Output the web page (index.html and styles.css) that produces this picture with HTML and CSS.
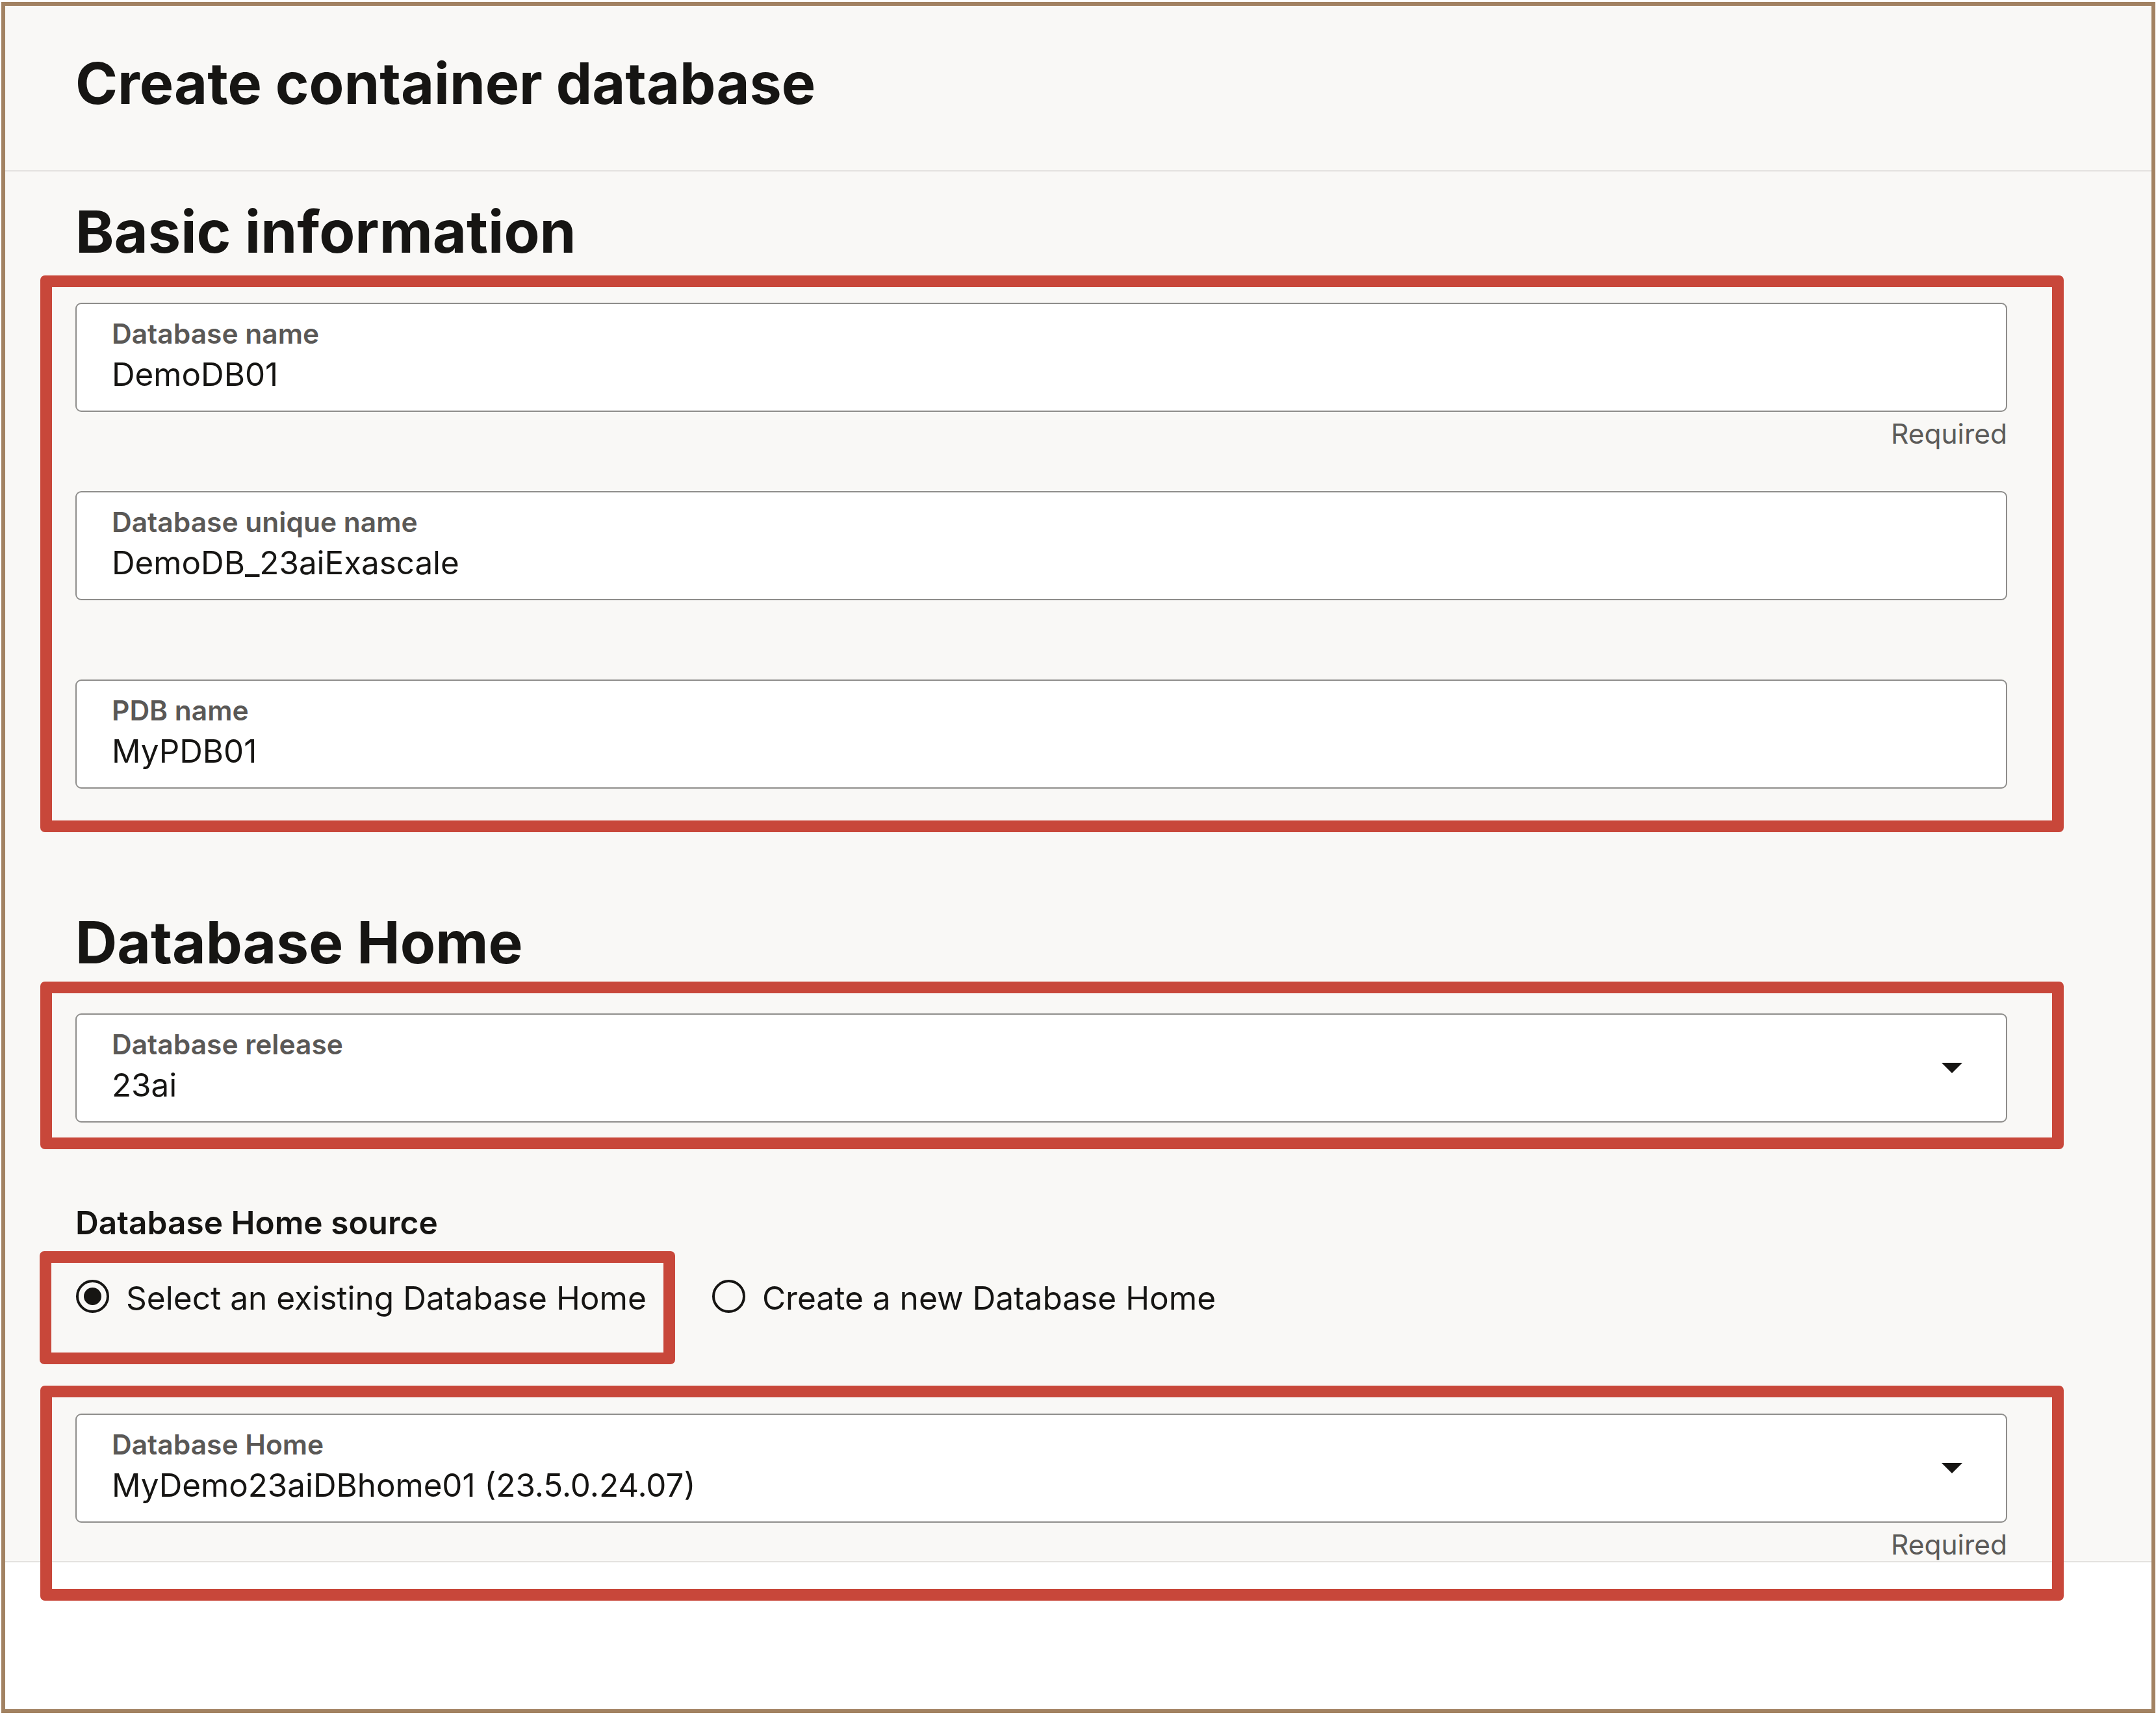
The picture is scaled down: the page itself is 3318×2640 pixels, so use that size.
FILE: index.html
```html
<!DOCTYPE html>
<html lang="en">
<head>
<meta charset="utf-8">
<title>Create container database</title>
<link rel="stylesheet" href="styles.css">
</head>
<body>
<div class="frame">
  <header class="page-header">
    <h1 class="page-title">Create container database</h1>
  </header>
  <main class="panel">
    <section class="section">
      <h2 class="section-title">Basic information</h2>
      <div class="fields annot annot-basic">
        <div class="field">
          <div class="input">
            <div class="input-text">
              <span class="input-label">Database name</span>
              <span class="input-value">DemoDB01</span>
            </div>
          </div>
          <div class="helper">Required</div>
        </div>
        <div class="field">
          <div class="input">
            <div class="input-text">
              <span class="input-label">Database unique name</span>
              <span class="input-value">DemoDB_23aiExascale</span>
            </div>
          </div>
          <div class="helper"></div>
        </div>
        <div class="field">
          <div class="input">
            <div class="input-text">
              <span class="input-label">PDB name</span>
              <span class="input-value">MyPDB01</span>
            </div>
          </div>
          <div class="helper"></div>
        </div>
      </div>
    </section>

    <section class="section section-home">
      <h2 class="section-title">Database Home</h2>
      <div class="field">
        <div class="input annot annot-release">
          <div class="input-text">
            <span class="input-label">Database release</span>
            <span class="input-value">23ai</span>
          </div>
          <svg class="caret" width="32" height="16" viewBox="0 0 32 16" aria-hidden="true"><polygon points="0,0 32,0 16,16"/></svg>
        </div>
        <div class="helper"></div>
      </div>

      <div class="radio-group">
        <div class="group-label">Database Home source</div>
        <div class="radio-row">
          <label class="radio annot annot-radio">
            <span class="radio-circle checked"><span class="radio-dot"></span></span>
            <span class="radio-text">Select an existing Database Home</span>
          </label>
          <label class="radio">
            <span class="radio-circle"></span>
            <span class="radio-text">Create a new Database Home</span>
          </label>
        </div>
      </div>

      <div class="field field-last annot annot-home">
        <div class="input">
          <div class="input-text">
            <span class="input-label">Database Home</span>
            <span class="input-value">MyDemo23aiDBhome01 (23.5.0.24.07)</span>
          </div>
          <svg class="caret" width="32" height="16" viewBox="0 0 32 16" aria-hidden="true"><polygon points="0,0 32,0 16,16"/></svg>
        </div>
        <div class="helper">Required</div>
      </div>
    </section>
  </main>
  <footer class="page-footer"></footer>
</div>
</body>
</html>
```
FILE: styles.css
```css
* { box-sizing: border-box; }

html, body {
  margin: 0;
  padding: 0;
  background: #ffffff;
}

body {
  font-family: "Inter", "Noto Sans", sans-serif;
  color: #161513;
}

.frame {
  margin: 3px 1px 3px 2px;
  height: 2634px;
  border: 6px solid #a28262;
  display: flex;
  flex-direction: column;
  background: #ffffff;
}

/* header */
.page-header {
  background: #f9f8f6;
  padding: 66px 222px 81px 108px;
  border-bottom: 2px solid #e4e2df;
}

.page-title {
  margin: 0;
  font-size: 88px;
  line-height: 106px;
  font-weight: 700;
}

/* main panel */
.panel {
  background: #f9f8f6;
  padding: 40px 222px 0 108px;
}

.section-title {
  margin: 0 0 56px;
  font-size: 90px;
  line-height: 106px;
  font-weight: 700;
}

.section-home .section-title {
  font-size: 89px;
}

.section-home {
  margin-top: 125px;
}

.fields {
  display: flex;
  flex-direction: column;
  gap: 63px;
}

.field {
  display: flex;
  flex-direction: column;
}

.input {
  height: 168px;
  background: #ffffff;
  border: 2px solid #8e8d8b;
  border-radius: 9px;
  padding: 21px 0 21px 54px;
  display: flex;
  align-items: center;
}

.input-text {
  flex: 1;
  align-self: flex-start;
  display: flex;
  flex-direction: column;
  gap: 8px;
}

.input-label {
  font-size: 42.5px;
  line-height: 50px;
  font-weight: 600;
  color: #5a5856;
}

.input-value {
  font-size: 49.3px;
  line-height: 58px;
  font-weight: 400;
  color: #161513;
  white-space: nowrap;
}

.caret {
  flex: none;
  margin-right: 67px;
  fill: #161513;
}

.helper {
  margin-top: 9px;
  height: 50px;
  font-size: 42.5px;
  line-height: 50px;
  color: #5c5b59;
  text-align: right;
}

/* radio group */
.radio-group {
  margin-top: 66px;
}

.group-label {
  font-size: 49.6px;
  line-height: 58px;
  font-weight: 600;
  color: #161513;
}

.radio-row {
  margin-top: 58px;
  display: flex;
  gap: 100px;
}

.radio {
  display: inline-flex;
  align-items: flex-start;
  gap: 26px;
  height: 58px;
}

.radio-circle {
  flex: none;
  width: 51px;
  height: 51px;
  margin-top: 1px;
  margin-left: 1px;
  border: 4px solid #161513;
  border-radius: 50%;
  display: flex;
  align-items: center;
  justify-content: center;
  background: transparent;
}

.radio-dot {
  width: 27px;
  height: 27px;
  border-radius: 50%;
  background: #161513;
}

.radio-text {
  font-size: 49.6px;
  line-height: 58px;
  white-space: nowrap;
}

.field-last {
  margin-top: 149px;
}

/* footer */
.page-footer {
  flex: 1;
  background: #ffffff;
  border-top: 2px solid #e4e2df;
}

/* red annotation frames drawn over the content */
.annot {
  position: relative;
}

.annot::after {
  content: "";
  position: absolute;
  border: 18px solid #c8473a;
  border-radius: 7px;
  pointer-events: none;
}

.annot-basic::after {
  top: -42px;
  left: -54px;
  right: -87px;
  bottom: -8px;
}

.annot-release::after {
  top: -51px;
  left: -56px;
  right: -89px;
  bottom: -43px;
}

.annot-radio::after {
  top: -43px;
  left: -55px;
  right: -44px;
  bottom: -73px;
}

.annot-home::after {
  top: -43px;
  left: -54px;
  right: -87px;
  bottom: -61px;
}
```
